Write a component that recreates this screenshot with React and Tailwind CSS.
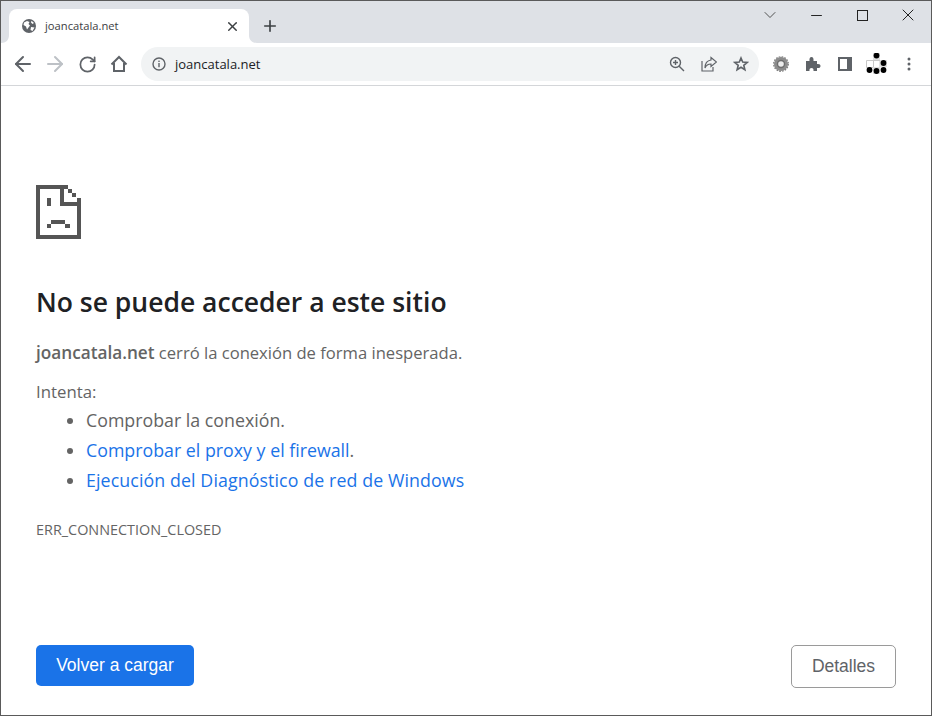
import { ArrowLeft, ArrowRight, RotateCw, Plus, X, ChevronDown, Minus } from 'lucide-react';

const sans = 'font-["Open_Sans","Noto_Sans",sans-serif]';

function TabFlare({ side }) {
  const d = side === 'left' ? 'M8 0 V8 H0 C5 8 8 5 8 0 Z' : 'M0 0 V8 H8 C3 8 0 5 0 0 Z';
  return (
    <svg width="8" height="8" viewBox="0 0 8 8" className={side === 'left' ? 'absolute bottom-0 -left-2' : 'absolute bottom-0 -right-2'}>
      <path d={d} fill="#fff" />
    </svg>
  );
}

function Globe() {
  return (
    <svg width="14" height="14" viewBox="0 0 14 14">
      <circle cx="7" cy="7" r="7" fill="#5f6368" />
      <path d="M2 3.5 L5 2 L7.5 3 L6.5 5 L8 6.5 L6.5 8.5 L5 10.5 L4 7.5 L1.5 6 Z M9.5 1.8 L12 4 L10.5 5 L9 3.5 Z M9 8 L12.5 8.5 L10.5 12 L8.5 11 Z" fill="#fff" />
    </svg>
  );
}

function Home() {
  return (
    <svg width="18" height="18" viewBox="0 0 18 18" fill="none" stroke="#5f6368" strokeWidth="2">
      <path d="M1.5 9.5 L9 2 L16.5 9.5 M4 8 V16 H14 V8" />
    </svg>
  );
}

function InfoIcon() {
  return (
    <svg width="14" height="14" viewBox="0 0 14 14" fill="none">
      <circle cx="7" cy="7" r="6" stroke="#5f6368" strokeWidth="1.4" />
      <rect x="6.3" y="6" width="1.4" height="4.2" fill="#5f6368" />
      <rect x="6.3" y="3.6" width="1.4" height="1.4" fill="#5f6368" />
    </svg>
  );
}

function ZoomIcon() {
  return (
    <svg width="16" height="16" viewBox="0 0 16 16" fill="none" stroke="#5f6368" strokeWidth="1.4">
      <circle cx="6.5" cy="6.5" r="5" />
      <path d="M10.2 10.2 L15 15 M4 6.5 H9 M6.5 4 V9" />
    </svg>
  );
}

function ShareIcon() {
  return (
    <svg width="16" height="16" viewBox="0 0 16 16" fill="none" stroke="#5f6368" strokeWidth="1.2">
      <path d="M1 5 V15 H12 V11" />
      <path d="M10 1.5 L15.5 6 L10 10.5 V8 C7 8 5 9.5 4 12 C4 7.5 6.5 4.5 10 4 Z" />
    </svg>
  );
}

function StarIcon() {
  return (
    <svg width="16" height="16" viewBox="0 0 16 16" fill="none" stroke="#5f6368" strokeWidth="1.6">
      <path d="M8 2 L9.7 6.1 L14.2 6.4 L10.8 9.3 L11.9 13.7 L8 11.3 L4.1 13.7 L5.2 9.3 L1.8 6.4 L6.3 6.1 Z" />
    </svg>
  );
}

function GearExt() {
  return (
    <svg width="16" height="16" viewBox="0 0 16 16">
      <circle cx="8" cy="8" r="7" fill="#8c8c8c" />
      <circle cx="8" cy="8" r="7.3" fill="none" stroke="#7a7a7a" strokeWidth="1.2" strokeDasharray="1.6 1.3" />
      <circle cx="8" cy="8" r="4.2" fill="#6e6e6e" />
      <circle cx="8" cy="8" r="2.8" fill="#ececec" />
    </svg>
  );
}

function Puzzle() {
  return (
    <svg width="16" height="16" viewBox="0 0 16 16">
      <path d="M1 5 H4.5 C4.2 2.5 5 1 6.5 1 C8 1 8.8 2.5 8.5 5 H12 V8 C14.5 7.6 15.5 8.6 15.5 10 C15.5 11.4 14.5 12.4 12 12 V15 H8.5 C8.8 13 8 12 6.5 12 C5 12 4.2 13 4.5 15 H1 Z" fill="#5f6368" />
    </svg>
  );
}

function SidePanel() {
  return (
    <svg width="14" height="14" viewBox="0 0 14 14">
      <rect width="14" height="14" fill="#5f6368" />
      <rect x="2" y="2" width="7" height="10" fill="#fff" />
    </svg>
  );
}

function Avatar() {
  const dots = [[10.5, 2.5], [17.5, 10], [3.5, 17], [10.5, 18], [17.5, 17]];
  return (
    <svg width="22" height="22" viewBox="0 0 22 22">
      <rect x="7" y="0" width="7" height="7" fill="#e0e0e0" />
      <path d="M0.5 7.5 H14 V14.5 H0.5 Z M7.5 7.5 V14.5" fill="#fff" stroke="#c8c8c8" />
      <rect x="14" y="7" width="7" height="7" fill="#e0e0e0" />
      <rect x="7" y="14" width="7" height="7" fill="#e0e0e0" />
      {dots.map(([cx, cy]) => (
        <circle key={`${cx}-${cy}`} cx={cx} cy={cy} r="2.9" fill="#000" />
      ))}
    </svg>
  );
}

function Dots() {
  return (
    <svg width="4" height="14" viewBox="0 0 4 14" fill="#5f6368">
      <circle cx="2" cy="2" r="1.5" />
      <circle cx="2" cy="7" r="1.5" />
      <circle cx="2" cy="12" r="1.5" />
    </svg>
  );
}

function SadFile() {
  return (
    <svg width="45" height="55" viewBox="0 0 45 55" fill="#555555" shapeRendering="crispEdges">
      <rect x="0" y="0" width="32" height="4" />
      <rect x="0" y="0" width="4" height="54" />
      <rect x="0" y="50" width="45" height="4" />
      <rect x="41" y="13" width="4" height="41" />
      <rect x="24" y="4" width="4" height="17" />
      <rect x="24" y="17" width="21" height="4" />
      <rect x="32" y="4" width="4" height="4" />
      <rect x="36" y="8" width="4" height="4" />
      <rect x="11" y="13" width="4" height="8" />
      <rect x="15" y="35" width="14" height="4" />
      <rect x="11" y="39" width="4" height="4" />
      <rect x="29" y="39" width="5" height="4" />
    </svg>
  );
}

function ToolBtn({ children }) {
  return <div className="w-8 h-8 flex items-center justify-center shrink-0">{children}</div>;
}

function CaptionBtn({ children }) {
  return <div className="w-[46px] h-[28px] flex items-center justify-center text-[#222]">{children}</div>;
}

export default function App() {
  return (
    <div className={`h-[716px] w-[932px] overflow-hidden flex flex-col border border-[#5a5a5a] bg-white ${sans}`}>
      <div className="h-[42px] bg-[#dee1e6] flex shrink-0">
        <div className="relative ml-2 mt-2 w-[240px] h-[34px] bg-white rounded-t-lg flex items-center pl-[13px] pr-[9px]">
          <TabFlare side="left" />
          <TabFlare side="right" />
          <Globe />
          <span className="ml-[9px] text-[11.2px] text-[#3c4043] flex-1">joancatala.net</span>
          <X size={15} strokeWidth={2.4} className="text-[#3c4043]" />
        </div>
        <div className="ml-[9px] mt-[13px] w-6 h-6 flex items-center justify-center">
          <Plus size={18} strokeWidth={2.2} className="text-[#3c4043]" />
        </div>
        <div className="ml-auto flex items-start">
          <CaptionBtn><ChevronDown size={20} strokeWidth={1.1} className="text-[#444]" /></CaptionBtn>
          <CaptionBtn><Minus size={17} strokeWidth={1.4} /></CaptionBtn>
          <CaptionBtn><div className="w-[11px] h-[11px] border border-[#222]" /></CaptionBtn>
          <CaptionBtn><X size={20} strokeWidth={1.2} /></CaptionBtn>
        </div>
      </div>

      <div className="h-[43px] bg-white border-b border-[#d4d6d9] flex items-center pl-[6px] shrink-0">
        <ToolBtn><ArrowLeft size={24} strokeWidth={2} className="text-[#5f6368]" /></ToolBtn>
        <ToolBtn><ArrowRight size={24} strokeWidth={2} className="text-[#bdc1c6]" /></ToolBtn>
        <ToolBtn><RotateCw size={19} strokeWidth={2.2} className="text-[#5f6368]" /></ToolBtn>
        <ToolBtn><Home /></ToolBtn>
        <div className="ml-[6px] w-[618px] h-[34px] rounded-full bg-[#f1f3f4] flex items-center pl-[11px] pr-[2px]">
          <InfoIcon />
          <span className="ml-[9px] pt-[2px] text-[13px] text-[#202124] flex-1">joancatala.net</span>
          <ToolBtn><ZoomIcon /></ToolBtn>
          <ToolBtn><ShareIcon /></ToolBtn>
          <ToolBtn><StarIcon /></ToolBtn>
        </div>
        <div className="ml-[6px] flex items-center">
          <ToolBtn><GearExt /></ToolBtn>
          <ToolBtn><Puzzle /></ToolBtn>
          <ToolBtn><SidePanel /></ToolBtn>
          <ToolBtn><Avatar /></ToolBtn>
          <ToolBtn><Dots /></ToolBtn>
        </div>
      </div>

      <main className="flex-1 flex flex-col pl-[35px] pr-[35px] pt-[99px] pb-[27px] min-h-0">
        <SadFile />
        <h1 className="mt-[43px] text-[26.5px] leading-[38px] font-semibold text-[#202124]">No se puede acceder a este sitio</h1>
        <p className="mt-[17px] text-[16.6px] leading-[30px] text-[#646464]">
          <strong className="text-[17.2px] font-semibold">joancatala.net</strong> cerró la conexión de forma inesperada.
        </p>
        <p className="mt-[9px] text-[16.8px] leading-[30px] text-[#646464]">Intenta:</p>
        <ul className="list-disc pl-[50px] text-[17.8px] leading-[30px] text-[#646464]">
          <li className="-mt-[2px]">Comprobar la conexión.</li>
          <li><span className="text-[#1a73e8]">Comprobar el proxy y el firewall</span>.</li>
          <li><span className="text-[#1a73e8] tracking-[0.1px]">Ejecución del Diagnóstico de red de Windows</span></li>
        </ul>
        <p className="mt-[25px] text-[14.4px] leading-[20px] text-[#646464]">ERR_CONNECTION_CLOSED</p>

        <div className={'mt-auto flex justify-between items-start font-["Liberation_Sans",Arial,sans-serif]'}>
          <button className="w-[158px] h-[41px] rounded-[5px] bg-[#1a73e8] text-white text-[17.5px]">Volver a cargar</button>
          <button className="w-[105px] h-[43px] rounded-[5px] border border-[#9a9a9a] bg-white text-[#5f6368] text-[17.5px]">Detalles</button>
        </div>
      </main>
    </div>
  );
}
